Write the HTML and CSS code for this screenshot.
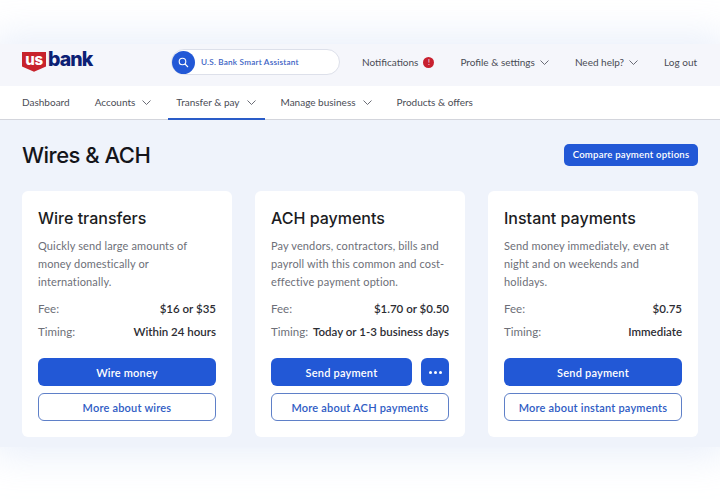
FILE: index.html
```html
<!DOCTYPE html>
<html lang="en">
<head>
<meta charset="utf-8">
<title>Wires &amp; ACH</title>
<link rel="stylesheet" href="styles.css">
</head>
<body>
<div class="app">
  <header class="top">
    <a class="logo">
      <svg class="shield" width="24" height="24" viewBox="0 0 24 24"><path d="M0 4H24V18.500L12 23.800L0 18.500Z" fill="#c8232c"/><text class="shield-text" x="12" y="16.500">us</text></svg>
      <span class="wordmark">bank</span>
    </a>
    <div class="assistant">
      <span class="search"><svg width="11" height="11" viewBox="0 0 11 11"><circle cx="4.500" cy="4.500" r="3.300" fill="none" stroke="#fff" stroke-width="1.100"/><path d="M7 7L10 10" stroke="#fff" stroke-width="1.100"/></svg></span>
      <span class="assistant-text">U.S. Bank Smart Assistant</span>
    </div>
    <nav class="utility">
      <a class="item notif">Notifications <span class="badge">!</span></a>
      <a class="item">Profile &amp; settings <svg class="chev" viewBox="0 0 9 5"><path d="M.5.500L4.500 4.500L8.500.500"/></svg></a>
      <a class="item">Need help? <svg class="chev" viewBox="0 0 9 5"><path d="M.5.500L4.500 4.500L8.500.500"/></svg></a>
      <a class="item">Log out</a>
    </nav>
  </header>
  <nav class="mainnav">
    <a class="tab">Dashboard</a>
    <a class="tab">Accounts <svg class="chev" viewBox="0 0 9 5"><path d="M.5.500L4.500 4.500L8.500.500"/></svg></a>
    <a class="tab active">Transfer &amp; pay <svg class="chev" viewBox="0 0 9 5"><path d="M.5.500L4.500 4.500L8.500.500"/></svg></a>
    <a class="tab">Manage business <svg class="chev" viewBox="0 0 9 5"><path d="M.5.500L4.500 4.500L8.500.500"/></svg></a>
    <a class="tab">Products &amp; offers</a>
  </nav>
  <main class="content">
    <div class="title-row">
      <h1>Wires &amp; ACH</h1>
      <a class="compare">Compare payment options</a>
    </div>
    <div class="cards">
      <section class="card">
        <h2>Wire transfers</h2>
        <p>Quickly send large amounts of money domestically or internationally.</p>
        <dl class="row fee"><dt>Fee:</dt><dd>$16 or $35</dd></dl>
        <dl class="row timing"><dt>Timing:</dt><dd>Within 24 hours</dd></dl>
        <div class="actions"><a class="btn primary">Wire money</a></div>
        <a class="btn outline">More about wires</a>
      </section>
      <section class="card">
        <h2>ACH payments</h2>
        <p>Pay vendors, contractors, bills and payroll with this common and cost-effective payment option.</p>
        <dl class="row fee"><dt>Fee:</dt><dd>$1.70 or $0.50</dd></dl>
        <dl class="row timing"><dt>Timing:</dt><dd>Today or 1-3 business days</dd></dl>
        <div class="actions"><a class="btn primary">Send payment</a><a class="btn primary more"><i></i><i></i><i></i></a></div>
        <a class="btn outline">More about ACH payments</a>
      </section>
      <section class="card">
        <h2>Instant payments</h2>
        <p>Send money immediately, even at night and on weekends and holidays.</p>
        <dl class="row fee"><dt>Fee:</dt><dd>$0.75</dd></dl>
        <dl class="row timing"><dt>Timing:</dt><dd>Immediate</dd></dl>
        <div class="actions"><a class="btn primary">Send payment</a></div>
        <a class="btn outline">More about instant payments</a>
      </section>
    </div>
  </main>
</div>
</body>
</html>
```

FILE: styles.css
```css
* { box-sizing: border-box; }
html, body { margin: 0; padding: 0; }
body {
  width: 720px;
  height: 504px;
  overflow: hidden;
  background: #fff;
  font-family: "Lato", "Liberation Sans", sans-serif;
  color: #3f4148;
}
.app {
  margin-top: 44px;
  height: 403px;
  background: #eff3fb;
  box-shadow: 0 0 36px 8px rgba(225, 233, 248, .75);
  display: flex;
  flex-direction: column;
}
.top {
  height: 42px;
  background: #f5f6fb;
  display: flex;
  align-items: center;
  padding: 0 22px 6px;
}
.logo { display: flex; flex: none; align-items: center; width: 149px; gap: 2px; margin-top: -4px; }
.shield { flex: none; margin-top: -1px; }
.shield-text {
  font: 800 15px "Inter", sans-serif;
  fill: #fff;
  text-anchor: middle;
  letter-spacing: -.3px;
}
.wordmark {
  font: 800 19.500px/1 "Inter", "Liberation Sans", sans-serif;
  color: #0c2074;
  letter-spacing: -.9px;
}
.assistant {
  flex: none;
  width: 169px;
  height: 26px;
  border-radius: 13px;
  background: #fff;
  border: 1px solid #dde0ea;
  display: flex;
  align-items: center;
  gap: 6px;
}
.search {
  width: 23px;
  height: 23px;
  border-radius: 50%;
  background: #2258d6;
  display: flex;
  align-items: center;
  justify-content: center;
}
.assistant-text { font-size: 8.200px; font-weight: 600; color: #3c63c4; letter-spacing: .2px; white-space: nowrap; }
.utility { display: flex; flex: none; align-items: center; margin-left: 22px; gap: 26px; }
.item, .tab { font-size: 10px; letter-spacing: 0; color: #4a4c55; white-space: nowrap; display: flex; align-items: center; }
.item .chev { margin-left: 5px; }
.badge {
  width: 11px;
  height: 11px;
  border-radius: 50%;
  background: #c8202f;
  color: #fff;
  font-size: 7px;
  text-align: center;
  line-height: 11px;
  margin-left: 5px;
}
.chev { width: 9px; height: 5px; fill: none; stroke: #5a5c66; stroke-width: .9; }
.mainnav {
  height: 34px;
  background: #fff;
  border-bottom: 1px solid #d3d5dc;
  display: flex;
  padding-left: 22px;
  gap: 25px;
}
.tab { height: 33px; padding-bottom: 1px; position: relative; }
.tab .chev { margin-left: 7px; }
.tab.active::after {
  content: "";
  position: absolute;
  left: -8px;
  right: -9px;
  bottom: -1px;
  height: 2px;
  background: #2a5cc8;
}
.content { padding: 0 22px; flex: 1; }
.title-row { height: 71px; padding-bottom: 2px; display: flex; align-items: center; justify-content: space-between; }
h1 { margin: 0; font: 500 22px/1 "Inter", sans-serif; color: #14151a; letter-spacing: -.5px; }
.compare {
  width: 134px;
  height: 22px;
  border-radius: 5px;
  background: #2258d6;
  color: #fff;
  font-size: 9.600px;
  font-weight: 600;
  letter-spacing: .2px;
  display: flex;
  align-items: center;
  justify-content: center;
}
.cards { display: grid; grid-template-columns: repeat(3, 210px); gap: 23px; }
.card {
  height: 246px;
  background: #fff;
  border-radius: 6px;
  padding: 16px;
}
h2 { margin: 0; font: 500 16px/22px "Inter", sans-serif; color: #1b1c22; }
p { margin: 8px 0 0; height: 54px; font-size: 11px; line-height: 18px; color: #6d6f78; letter-spacing: .13px; }
.row { margin: 0; display: flex; justify-content: space-between; align-items: center; font-size: 11.500px; }
.row dt { color: #6d6f78; }
.row dd { margin: 0; font-weight: 600; color: #2c2d33; }
.fee { margin-top: 8px; height: 18px; }
.timing { margin-top: 5px; height: 18px; }
.actions { display: flex; gap: 9px; margin-top: 18px; }
.btn {
  height: 28px;
  border-radius: 6px;
  display: flex;
  align-items: center;
  justify-content: center;
  font-size: 11px;
  font-weight: 600;
  letter-spacing: .2px;
}
.primary { background: #2258d6; color: #fff; flex: 1; }
.more { flex: 0 0 28px; gap: 2px; }
.more i { width: 3px; height: 3px; border-radius: 50%; background: #fff; }
.outline { margin-top: 7px; border: 1px solid #5f80c8; color: #2f5cc4; background: #fff; }
```
